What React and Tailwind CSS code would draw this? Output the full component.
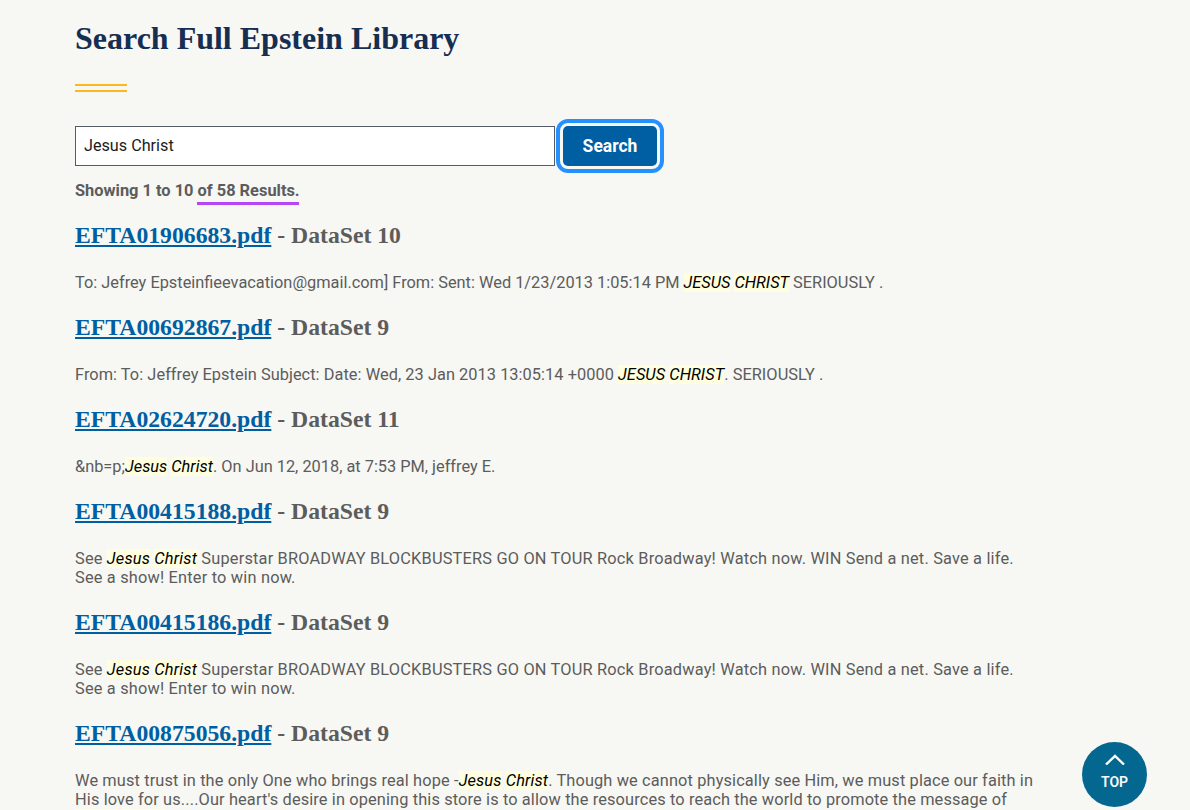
import React from "react";

const sans = "font-['Roboto',sans-serif]";
const serif = "font-['Liberation_Serif',serif]";

const Mark = ({ children }) => (
  <em className="bg-[#ffffe0] text-black italic">{children}</em>
);

const Name = () => (
  <>
    <Mark>Jesus</Mark> <Mark>Christ</Mark>
  </>
);

const results = [
  {
    file: "EFTA01906683.pdf",
    set: "DataSet 10",
    spacing: "",
    text: (
      <>
        To: Jefrey Epsteinfieevacation@gmail.com] From: Sent: Wed 1/23/2013 1:05:14 PM <Mark>JESUS</Mark> <Mark>CHRIST</Mark> SERIOUSLY .
      </>
    ),
  },
  {
    file: "EFTA00692867.pdf",
    set: "DataSet 9",
    spacing: "tracking-[0.05px]",
    text: (
      <>
        From: To: Jeffrey Epstein Subject: Date: Wed, 23 Jan 2013 13:05:14 +0000 <Mark>JESUS</Mark> <Mark>CHRIST</Mark>. SERIOUSLY .
      </>
    ),
  },
  {
    file: "EFTA02624720.pdf",
    set: "DataSet 11",
    spacing: "",
    text: (
      <>
        &amp;nb=p;<Name />. On Jun 12, 2018, at 7:53 PM, jeffrey E.
      </>
    ),
  },
  {
    file: "EFTA00415188.pdf",
    set: "DataSet 9",
    spacing: "tracking-[0.19px]",
    text: (
      <>
        See <Name /> Superstar BROADWAY BLOCKBUSTERS GO ON TOUR Rock Broadway! Watch now. WIN Send a net. Save a life. See a show! Enter to win now.
      </>
    ),
  },
  {
    file: "EFTA00415186.pdf",
    set: "DataSet 9",
    spacing: "tracking-[0.19px]",
    text: (
      <>
        See <Name /> Superstar BROADWAY BLOCKBUSTERS GO ON TOUR Rock Broadway! Watch now. WIN Send a net. Save a life. See a show! Enter to win now.
      </>
    ),
  },
  {
    file: "EFTA00875056.pdf",
    set: "DataSet 9",
    spacing: "tracking-[0.13px]",
    text: (
      <>
        We must trust in the only One who brings real hope -<Name />. Though we cannot physically see Him, we must place our faith in His love for us....Our heart's desire in opening this store is to allow the resources to reach the world to promote the message of <Name />.
      </>
    ),
  },
];

const App = () => {
  return (
    <div className={`relative h-[810px] overflow-hidden bg-[#f7f7f3] ${sans} text-[#5c5c5c]`}>
      <div className="pl-[75px] w-[1040px]">
        <h1 className={`pt-[20px] text-[32px] leading-[36px] font-bold text-[#162e51] ${serif}`}>
          Search Full Epstein Library
        </h1>
        <div className="mt-[28px] w-[52px] h-[8px] border-y-2 border-[#fdb81e]" />

        <div className="mt-[34px] flex items-center">
          <input
            className="w-[480px] h-[40px] border border-[#565c65] bg-white px-2 pb-[2px] text-[16.2px] text-[#1b1b1b] outline-none"
            defaultValue="Jesus Christ"
            readOnly
          />
          <button
            type="button"
            className="ml-2 w-[94px] h-[40px] rounded-[5px] bg-[#005ea2] text-[17.5px] font-bold text-white outline-[4px] outline-offset-[3px] outline-[#2491ff]"
          >
            Search
          </button>
        </div>

        <p className="mt-[15px] text-[16.4px] leading-[19px] font-bold">
          Showing 1 to 10{" "}
          <span className="relative">
            of 58 Results.
            <span className="absolute left-[-1px] right-[1px] top-[21px] h-[3px] bg-[#b845f5]" />
          </span>
        </p>

        {results.map((r) => (
          <div key={r.file}>
            <h2 className={`mt-[20px] text-[23.7px] leading-[30px] font-bold ${serif}`}>
              <a href="#" className="text-[#005ea2] underline">{r.file}</a> - {r.set}
            </h2>
            <p className={`mt-[23px] text-[16.35px] leading-[19px] ${r.spacing}`}>{r.text}</p>
          </div>
        ))}
      </div>

      <a
        href="#"
        className="absolute left-[1082px] top-[742px] flex h-[65px] w-[65px] flex-col items-center rounded-full bg-[#04678f] text-white"
      >
        <svg className="mt-[12px]" width="22" height="11" viewBox="0 0 22 11" fill="none" stroke="currentColor" strokeWidth="2.4">
          <path d="M2 10.5 L11 2 L20 10.5" />
        </svg>
        <span className="text-sm leading-[16px] font-semibold mt-[9px]">TOP</span>
      </a>
    </div>
  );
};

export default App;
